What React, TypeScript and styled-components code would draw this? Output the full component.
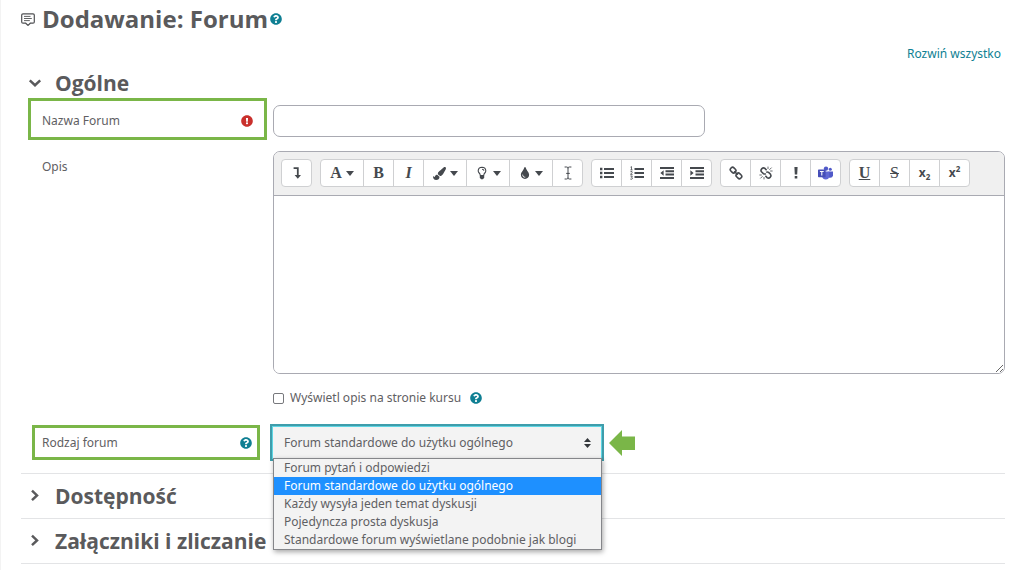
import React from 'react';
import styled, { createGlobalStyle, css } from 'styled-components';
import { FaPaintBrush, FaTint, FaQuestionCircle, FaExclamationCircle } from 'react-icons/fa';

const GlobalStyle = createGlobalStyle`
  *, *::before, *::after { box-sizing: border-box; }
  body {
    margin: 0;
    background: #fff;
    color: #5f6063;
    font: 12px/18px "Noto Sans", "Open Sans", sans-serif;
  }
  button, input, select, textarea { font: inherit; color: inherit; }
`;

const green = '#7ab648';
const teal = '#0f7f93';

const Page = styled.main`
  padding: 3px 19px 6px 20px;
  border-left: 1px solid #f3f3f3;
`;

const TitleBar = styled.header`
  display: flex;
  align-items: center;
  height: 32px;
`;

const Title = styled.h1`
  margin: 0 2px 0 7px;
  font: 700 24px/32px "Open Sans", sans-serif;
  color: #5a5a5c;
`;

const HelpButton = styled.button`
  display: inline-flex;
  padding: 0;
  border: 0;
  background: none;
  color: ${teal};
  border-radius: 50%;
`;

const ExpandRow = styled.div`
  display: flex;
  justify-content: flex-end;
  padding: 10px 4px 6px 0;
`;

const ExpandLink = styled.a`
  color: ${teal};
  text-decoration: none;
`;

const Section = styled.section<{ $ruled?: boolean }>`
  ${p => p.$ruled && css`
    padding: 8px 0;
    border-bottom: 1px solid #e3e4e6;
  `}
`;

const SectionTitle = styled.h2`
  margin: 0;
  font: 700 21px/28px "Open Sans", sans-serif;
`;

const SectionToggle = styled.button`
  display: flex;
  align-items: center;
  gap: 13px;
  padding: 0 0 0 7px;
  border: 0;
  background: none;
  color: #5a5a5c;
`;

const Fields = styled.div`
  display: flex;
  flex-direction: column;
  padding: 1px 0 12px;
  border-bottom: 1px solid #e3e4e6;
`;

const Row = styled.div<{ $top?: number }>`
  display: grid;
  grid-template-columns: 252px minmax(0, 1fr);
  align-items: center;
  margin-top: ${p => p.$top ?? 0}px;
`;

const MarkedLabel = styled.div<{ $compact?: boolean }>`
  display: flex;
  align-items: center;
  justify-content: space-between;
  border: 3px solid ${green};
  height: ${p => (p.$compact ? 35 : 42)}px;
  margin: ${p => (p.$compact ? '0 13px 0 11px' : '0 6px 0 7px')};
  padding: ${p => (p.$compact ? '0 5px 0 7px' : '3px 11px 0')};
`;

const PlainLabel = styled.label`
  align-self: start;
  padding: 7px 0 0 21px;
`;

const Required = styled.span`
  display: inline-flex;
  color: #c9302c;
`;

const TextInput = styled.input`
  width: 59%;
  height: 32px;
  margin-top: 3px;
  padding: 0 10px;
  border: 1px solid #a9aab2;
  border-radius: 7px;
  background: #fff;
`;

const Editor = styled.div`
  display: flex;
  flex-direction: column;
  border: 1px solid #a9aab2;
  border-radius: 7px;
  overflow: hidden;
`;

const Toolbar = styled.div`
  display: flex;
  flex-wrap: wrap;
  gap: 8px;
  padding: 7px 7px 8px;
  background: #f0f0f0;
  border-bottom: 1px solid #a9aab2;
`;

const Group = styled.div`
  display: flex;
`;

const Tool = styled.button<{ $menu?: boolean }>`
  display: flex;
  align-items: center;
  justify-content: center;
  gap: 4px;
  width: ${p => (p.$menu ? 44 : 31)}px;
  height: 28px;
  padding: 0;
  border: 1px solid #cfd0d2;
  background: #fff;
  color: #45494e;
  font-size: 14px;

  & + & { margin-left: -1px; }
  &:first-child { border-top-left-radius: 4px; border-bottom-left-radius: 4px; }
  &:last-child { border-top-right-radius: 4px; border-bottom-right-radius: 4px; }
`;

const Glyph = styled.span<{ $italic?: boolean; $line?: string; $light?: boolean }>`
  font: ${p => (p.$italic ? 'italic' : 'normal')} ${p => (p.$light ? 400 : 700)} 16px/20px "Liberation Serif", serif;
  text-decoration: ${p => p.$line ?? 'none'};
  text-decoration-thickness: 1px;
`;

const Script = styled.span`
  font-size: 12px;
  font-weight: 700;
  line-height: 18px;
  sub, sup { font-size: 8px; line-height: 0; }
`;

const Caret = styled.span`
  border: 4px solid transparent;
  border-top: 5px solid currentColor;
  border-bottom: 0;
`;

const TextArea = styled.textarea`
  display: block;
  width: 100%;
  height: 177px;
  padding: 8px;
  border: 0;
  resize: both;
`;

const CheckRow = styled.div`
  display: flex;
  align-items: center;
  height: 20px;
  margin: 14px 0 16px 252px;
`;

const CheckBox = styled.input`
  appearance: none;
  width: 11px;
  height: 11px;
  margin: 0 6px 0 0;
  border: 1px solid #77787c;
  border-radius: 2px;
  background: #fff;
  &:checked { background: ${teal}; }
`;

const CheckLabel = styled.label`
  margin-right: 9px;
`;

const SelectLine = styled.div`
  display: flex;
  align-items: center;
  gap: 5px;
  margin-left: -3px;
`;

const SelectWrap = styled.div`
  position: relative;
  width: 334px;
  border: 2px solid #3f9dab;
`;

const Select = styled.select`
  display: block;
  appearance: none;
  width: 100%;
  height: 33px;
  padding: 0 11px;
  border: 1px solid #5fd5e3;
  border-radius: 0;
  background: #f3f3f3;
  outline: none;
`;

const SelectArrows = styled.svg`
  position: absolute;
  right: 11px;
  top: 12px;
  pointer-events: none;
`;

const Menu = styled.ul`
  position: absolute;
  z-index: 1;
  top: 32px;
  left: 1px;
  right: 0;
  margin: 0;
  padding: 0;
  list-style: none;
  background: #f3f3f3;
  border: 1px solid #85868a;
  box-shadow: 1px 2px 5px rgba(0, 0, 0, 0.35);
`;

const MenuItem = styled.li<{ $active?: boolean }>`
  padding: 0 10px;
  line-height: 18px;
  white-space: nowrap;
  background: ${p => (p.$active ? '#1e90ff' : 'transparent')};
  color: ${p => (p.$active ? '#fff' : 'inherit')};
`;

const Icon = ({ children }: { children: React.ReactNode }) => (
  <svg width="14" height="14" viewBox="0 0 14 14" fill="none" stroke="currentColor" aria-hidden="true">{children}</svg>
);

const ListUl = () => (
  <Icon>
    <path d="M4 3H14M4 7H14M4 11H14" strokeWidth="1.8" />
    <path d="M0 3H2.4M0 7H2.4M0 11H2.4" strokeWidth="2.4" />
  </Icon>
);
const ListOl = () => (
  <Icon>
    <path d="M4.5 3H14M4.5 7H14M4.5 11H14" strokeWidth="1.8" />
    <path d="M.5 1.2L1.5.6V3.8M.4 3.9H2.6M.4 5.7Q2.6 4.8 2.2 6.4L.5 8.4H2.6M.4 10H2.4L1.4 11.3Q3 11.6 2.2 12.9Q1.4 13.7.3 13" strokeWidth=".8" />
  </Icon>
);
const Dent = ({ out }: { out?: boolean }) => (
  <Icon>
    <path d="M0 2H14M5.5 5.3H14M5.5 8.6H14M0 12H14" strokeWidth="2" />
    <path d={out ? 'M3.6 4.2V9.8L.4 7Z' : 'M.4 4.2V9.8L3.6 7Z'} fill="currentColor" stroke="none" />
  </Icon>
);
const Expand = () => (
  <Icon>
    <path d="M3.6 2.2H7.8V10" strokeWidth="1.8" />
    <path d="M4.6 9H11L7.8 12.8Z" fill="currentColor" stroke="none" />
  </Icon>
);
const Bulb = () => (
  <Icon>
    <path d="M5.2 9.2Q5.2 8 4.2 7Q3.2 6 3.2 4.7Q3.4 1.5 7 1.3Q10.6 1.5 10.8 4.7Q10.8 6 9.8 7Q8.8 8 8.8 9.2M7 3.2Q8.7 3.2 8.9 4.6" strokeWidth="1.1" />
    <path d="M4.8 9H9.2V11.8Q8.8 13.2 7 13.4Q5.2 13.2 4.8 11.8Z" fill="currentColor" stroke="none" />
  </Icon>
);
const Link = () => (
  <Icon>
    <rect x="-2.9" y="-2.2" width="5.8" height="4.4" rx="1.9" transform="translate(4.1 4.1) rotate(45)" strokeWidth="1.6" />
    <rect x="-2.9" y="-2.2" width="5.8" height="4.4" rx="1.9" transform="translate(9.9 9.9) rotate(45)" strokeWidth="1.6" />
    <path d="M5.2 5.2L8.8 8.8" strokeWidth="1.6" />
  </Icon>
);
const Unlink = () => (
  <Icon>
    <path d="M7.6 4.2L5.9 2.4Q4.4 1.2 2.9 2.6Q1.3 4.2 2.5 5.8L4.4 7.6Q5.6 8.4 6.8 7.6" strokeWidth="1.6" />
    <path d="M6.4 9.8L8.1 11.6Q9.6 12.8 11.1 11.4Q12.7 9.8 11.5 8.2L9.6 6.4Q8.4 5.6 7.2 6.4" strokeWidth="1.6" />
    <path d="M9 .6V3M12.6 1.6L10.4 3.8M13.6 5H11.2M.4 9H2.8M1.4 12.4L3.6 10.2M5 13.4V11" strokeWidth=".8" />
  </Icon>
);
const Cursor = () => (
  <Icon>
    <path d="M3.6 1H5.6Q7 1 7 2.2Q7 1 8.4 1H10.4M7 2V12M3.6 13H5.6Q7 13 7 11.8Q7 13 8.4 13H10.4M5.2 7.4H8.8" />
  </Icon>
);
const Teams = () => (
  <svg width="15" height="14" viewBox="0 0 15 14" fill="#5059c9" aria-hidden="true">
    <circle cx="8" cy="2.6" r="2.2" />
    <circle cx="12.3" cy="3.3" r="1.5" />
    <path d="M10.5 5.4H15V9.6Q14.6 11.8 12.2 11.8H10.5Z" />
    <path d="M4 5.4H11.3V10Q11 13.6 7.7 13.6Q4.8 13.6 4 10.6Z" fill="#6068d4" />
    <rect y="3.6" width="7.6" height="7.6" rx=".7" fill="#464eb8" />
    <path d="M1.9 5.5H5.7M3.8 5.5V9.6" stroke="#fff" strokeWidth="1.1" />
  </svg>
);
const Bang = () => (
  <Icon>
    <path d="M5.4 1H8.6L8.2 8.6H5.8ZM5.7 10H8.3V12.6H5.7Z" fill="currentColor" stroke="none" />
  </Icon>
);
const Chevron = ({ open }: { open?: boolean }) => (
  <svg width="14" height="14" viewBox="0 0 14 14" fill="none" stroke="currentColor" strokeWidth="2.5" aria-hidden="true">
    <path d={open ? 'M1.8 4.4L7 9.2L12.2 4.4' : 'M4 1.6L9 6.4L4 11.2'} />
  </svg>
);
const ForumIcon = () => (
  <svg width="14" height="14" viewBox="0 0 14 14" fill="none" stroke="#505154" aria-hidden="true">
    <path d="M2 1.8H12Q13.3 1.8 13.3 3V10Q13.3 11.2 12 11.2H9.3L7 13.4L4.7 11.2H2Q.7 11.2.7 10V3Q.7 1.8 2 1.8Z" strokeWidth="1.2" />
    <path d="M3 4.4H9.5M3 6.5H10.8M3 8.6H8.8" strokeWidth=".9" />
  </svg>
);
const GreenArrow = () => (
  <svg width="26" height="26" viewBox="0 0 26 26" fill={green} aria-hidden="true">
    <path d="M0 13L13 0V6.5H26V20H13V26Z" />
  </svg>
);

type ToolDef = { label: string; icon: React.ReactNode; menu?: boolean };

const toolGroups: ToolDef[][] = [
  [{ label: 'Pokaż więcej przycisków', icon: <Expand /> }],
  [
    { label: 'Style akapitu', icon: <Glyph>A</Glyph>, menu: true },
    { label: 'Pogrubienie', icon: <Glyph>B</Glyph> },
    { label: 'Kursywa', icon: <Glyph $italic>I</Glyph> },
    { label: 'Kolor czcionki', icon: <FaPaintBrush size={13} />, menu: true },
    { label: 'Kolor tła', icon: <Bulb />, menu: true },
    { label: 'Kolor', icon: <FaTint size={12} />, menu: true },
    { label: 'Kursor', icon: <Cursor /> },
  ],
  [
    { label: 'Lista nieuporządkowana', icon: <ListUl /> },
    { label: 'Lista uporządkowana', icon: <ListOl /> },
    { label: 'Zmniejsz wcięcie', icon: <Dent out /> },
    { label: 'Zwiększ wcięcie', icon: <Dent /> },
  ],
  [
    { label: 'Odnośnik', icon: <Link /> },
    { label: 'Usuń odnośnik', icon: <Unlink /> },
    { label: 'Uwaga', icon: <Bang /> },
    { label: 'Teams', icon: <Teams /> },
  ],
  [
    { label: 'Podkreślenie', icon: <Glyph $line="underline">U</Glyph> },
    { label: 'Przekreślenie', icon: <Glyph $line="line-through" $light>S</Glyph> },
    { label: 'Indeks dolny', icon: <Script>x<sub>2</sub></Script> },
    { label: 'Indeks górny', icon: <Script>x<sup>2</sup></Script> },
  ],
];

const forumTypes = [
  'Forum pytań i odpowiedzi',
  'Forum standardowe do użytku ogólnego',
  'Każdy wysyła jeden temat dyskusji',
  'Pojedyncza prosta dyskusja',
  'Standardowe forum wyświetlane podobnie jak blogi',
];

const Help = () => (
  <HelpButton type="button" aria-label="Pomoc"><FaQuestionCircle size={12} /></HelpButton>
);

export default function App() {
  const [type, setType] = React.useState(forumTypes[1]);

  return (
    <>
      <GlobalStyle />
      <Page>
        <TitleBar>
          <ForumIcon />
          <Title>Dodawanie: Forum</Title>
          <Help />
        </TitleBar>
        <ExpandRow>
          <ExpandLink href="#all">Rozwiń wszystko</ExpandLink>
        </ExpandRow>

        <Section>
          <SectionTitle>
            <SectionToggle type="button" aria-expanded="true"><Chevron open />Ogólne</SectionToggle>
          </SectionTitle>
          <Fields>
            <Row>
              <MarkedLabel>
                <label htmlFor="name">Nazwa Forum</label>
                <Required><FaExclamationCircle size={12} /></Required>
              </MarkedLabel>
              <TextInput id="name" type="text" required />
            </Row>

            <Row $top={11}>
              <PlainLabel htmlFor="intro">Opis</PlainLabel>
              <Editor>
                <Toolbar role="toolbar">
                  {toolGroups.map((group, i) => (
                    <Group key={i}>
                      {group.map(tool => (
                        <Tool key={tool.label} type="button" aria-label={tool.label} $menu={tool.menu}>
                          {tool.icon}
                          {tool.menu && <Caret />}
                        </Tool>
                      ))}
                    </Group>
                  ))}
                </Toolbar>
                <TextArea id="intro" />
              </Editor>
            </Row>

            <CheckRow>
              <CheckBox id="show" type="checkbox" />
              <CheckLabel htmlFor="show">Wyświetl opis na stronie kursu</CheckLabel>
              <Help />
            </CheckRow>

            <Row>
              <MarkedLabel $compact>
                <label htmlFor="type">Rodzaj forum</label>
                <Help />
              </MarkedLabel>
              <SelectLine>
                <SelectWrap>
                  <Select id="type" value={type} onChange={e => setType(e.target.value)}>
                    {forumTypes.map(t => <option key={t}>{t}</option>)}
                  </Select>
                  <SelectArrows width="7" height="10" viewBox="0 0 7 10" fill="#34373b" aria-hidden="true">
                    <path d="M0 4L3.5 0L7 4ZM0 6L3.5 10L7 6Z" />
                  </SelectArrows>
                  <Menu role="listbox" aria-label="Rodzaj forum">
                    {forumTypes.map(t => (
                      <MenuItem key={t} role="option" aria-selected={t === type} $active={t === type} onClick={() => setType(t)}>
                        {t}
                      </MenuItem>
                    ))}
                  </Menu>
                </SelectWrap>
                <GreenArrow />
              </SelectLine>
            </Row>
          </Fields>
        </Section>

        {['Dostępność', 'Załączniki i zliczanie'].map(name => (
          <Section key={name} $ruled>
            <SectionTitle>
              <SectionToggle type="button" aria-expanded="false"><Chevron />{name}</SectionToggle>
            </SectionTitle>
          </Section>
        ))}
      </Page>
    </>
  );
}
